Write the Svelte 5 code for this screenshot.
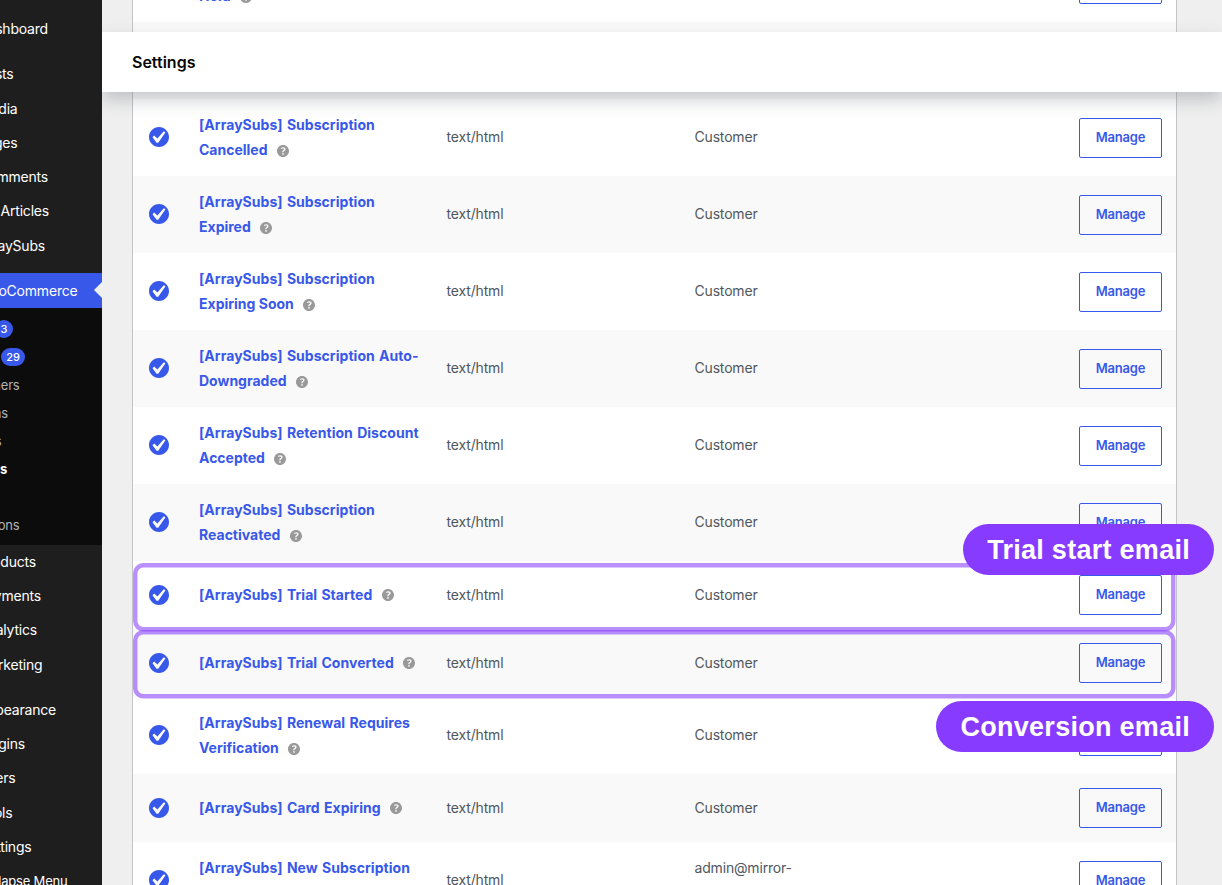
<script>
  const mainMenu = [
    { label: 'Dashboard', end: 48, gap: 11 },
    { label: 'Posts', end: 13.5 },
    { label: 'Media', end: 17.5 },
    { label: 'Pages', end: 17.5 },
    { label: 'Comments', end: 48 },
    { label: 'KB Articles', end: 49 },
    { label: 'ArraySubs', end: 45, gap: 11 },
    { label: 'WooCommerce', end: 77.5, current: true }
  ];

  const subMenu = [
    { label: 'Home', count: 3, end: 13 },
    { label: 'Orders', count: 29, end: 25 },
    { label: 'Customers', end: 19.5 },
    { label: 'Coupons', end: 8 },
    { label: 'Reports', end: 1.5 },
    { label: 'Settings', end: 7, current: true },
    { label: 'Status', end: -6 },
    { label: 'Extensions', end: 19.5 }
  ];

  const lowerMenu = [
    { label: 'Products', end: 36 },
    { label: 'Payments', end: 41 },
    { label: 'Analytics', end: 37 },
    { label: 'Marketing', end: 42.5, gap: 11 },
    { label: 'Appearance', end: 56 },
    { label: 'Plugins', end: 25 },
    { label: 'Users', end: 15.5 },
    { label: 'Tools', end: 12.5 },
    { label: 'Settings', end: 31.5 },
    { label: 'Collapse Menu', end: 67.5, small: true }
  ];

  const emails = [
    { lines: ['[ArraySubs] Subscription On', 'Hold'] },
    { lines: ['[ArraySubs] Subscription', 'Renewed'] },
    { lines: ['[ArraySubs] Subscription', 'Cancelled'] },
    { lines: ['[ArraySubs] Subscription', 'Expired'] },
    { lines: ['[ArraySubs] Subscription', 'Expiring Soon'] },
    { lines: ['[ArraySubs] Subscription Auto-', 'Downgraded'] },
    { lines: ['[ArraySubs] Retention Discount', 'Accepted'] },
    { lines: ['[ArraySubs] Subscription', 'Reactivated'] },
    { lines: ['[ArraySubs] Trial Started'] },
    { lines: ['[ArraySubs] Trial Converted'] },
    { lines: ['[ArraySubs] Renewal Requires', 'Verification'] },
    { lines: ['[ArraySubs] Card Expiring'] },
    { lines: ['[ArraySubs] New Subscription', 'Created'], recipient: ['admin@mirror-', 'site.test'] }
  ];

  // the menu is scrolled 58px to the left
  const offset = 58;
</script>

{#snippet menuItem(item)}
  <li class:current={item.current} class:small={item.small} style:margin-bottom="{item.gap ?? 0}px">
    <a href="#menu" style:width="{item.end + offset}px">{item.label}</a>
  </li>
{/snippet}

<div class="page">
  <nav class="sidebar">
    <ul class="menu">
      {#each mainMenu as item}
        {@render menuItem(item)}
      {/each}
    </ul>
    <ul class="submenu">
      {#each subMenu as item}
        <li class:current={item.current}>
          <a href="#submenu" style:width="{item.end + offset}px">
            {item.label}
            {#if item.count}<span class="count">{item.count}</span>{/if}
          </a>
        </li>
      {/each}
    </ul>
    <ul class="menu lower">
      {#each lowerMenu as item}
        {@render menuItem(item)}
      {/each}
    </ul>
  </nav>

  <main>
    <div class="emails">
      {#each emails as email}
        <div class="row" class:single={email.lines.length === 1}>
          <svg class="status" viewBox="2 2 16 16" aria-hidden="true">
            <path d="M10 2c-4.42 0-8 3.58-8 8s3.58 8 8 8 8-3.58 8-8-3.58-8-8-8zm-.615 12.66h-1.34l-3.24-4.54 1.341-1.25 2.569 2.4 5.141-5.931 1.34.94-5.811 8.381z" />
          </svg>
          <div class="name">
            {#each email.lines as line, i}
              <div class="line">
                <a href="#email">{line}</a>
                {#if i === email.lines.length - 1}
                  <svg class="help" viewBox="3 3 14 14" aria-hidden="true">
                    <path d="M17 10c0-3.87-3.14-7-7-7-3.87 0-7 3.13-7 7s3.13 7 7 7c3.86 0 7-3.13 7-7zm-6.3 1.48H9.14v-.43c0-.38.08-.7.24-.98s.46-.57.88-.89c.41-.29.68-.53.81-.71.14-.18.2-.39.2-.62 0-.25-.09-.44-.28-.58-.19-.13-.45-.19-.79-.19-.58 0-1.25.19-2 .57l-.64-1.28c.87-.49 1.8-.74 2.77-.74.81 0 1.45.2 1.92.58.48.39.71.91.71 1.55 0 .43-.09.8-.29 1.11-.19.32-.57.67-1.11 1.06-.38.28-.61.49-.71.63-.1.15-.15.34-.15.57v.35zm-1.47 2.74c-.18-.17-.27-.42-.27-.73 0-.33.08-.58.26-.75s.43-.25.77-.25c.32 0 .57.09.75.26s.27.42.27.74c0 .3-.09.55-.27.72-.18.18-.43.27-.75.27-.33 0-.58-.09-.76-.26z" />
                  </svg>
                {/if}
              </div>
            {/each}
          </div>
          <div class="cell">text/html</div>
          <div class="cell">
            {#each email.recipient ?? ['Customer'] as part}
              <div>{part}</div>
            {/each}
          </div>
          <button class="manage">Manage</button>
        </div>
      {/each}
    </div>
    <header><h1>Settings</h1></header>
  </main>

  <svg class="marks" viewBox="0 0 1222 885" aria-hidden="true">
    <rect x="135.25" y="565.25" width="1038" height="64" rx="8" />
    <rect x="135.25" y="632.25" width="1038" height="64" rx="8" />
  </svg>
  <div class="tag start">Trial start email</div>
  <div class="tag conversion">Conversion email</div>
</div>

<style>
  :global(body) {
    background: #efefef;
  }

  .page {
    position: relative;
    display: flex;
    width: 1222px;
    height: 885px;
    overflow: hidden;
    background: #efefef;
    font-family: Inter, 'Liberation Sans', sans-serif;
  }

  /* Admin menu */
  .sidebar {
    position: relative;
    z-index: 2;
    flex: none;
    width: 160px;
    margin-left: -58px;
    padding-top: 11px;
    box-sizing: border-box;
    background: #1e1e1e;
  }

  ul {
    margin: 0;
    padding: 0;
    list-style: none;
  }

  .menu li {
    display: flex;
    align-items: center;
    position: relative;
    height: 34.25px;
  }

  .sidebar a {
    display: flex;
    justify-content: flex-end;
    align-items: center;
    color: #fff;
    font-size: 14px;
    letter-spacing: -0.2px;
    white-space: nowrap;
    text-decoration: none;
  }

  .menu li.current {
    height: 35px;
    background: #3858e9;
  }

  .menu li.current::after {
    content: '';
    position: absolute;
    right: 0;
    border: 8px solid transparent;
    border-right-color: #efefef;
  }

  .menu li.small a {
    font-size: 13px;
  }

  .menu a {
    padding-top: 1px;
  }

  .menu.lower a {
    padding: 0 0 1px;
  }

  .submenu {
    height: 237px;
    padding-top: 7px;
    box-sizing: border-box;
    background: #0c0c0c;
  }

  .submenu li {
    display: flex;
    align-items: center;
    height: 28px;
  }

  .submenu a {
    color: #b4b4b4;
    font-size: 13px;
  }

  .submenu .current a {
    color: #fff;
    font-weight: 700;
  }

  .count {
    min-width: 18px;
    height: 18px;
    margin-left: 4px;
    padding: 0 5px;
    box-sizing: border-box;
    border-radius: 9px;
    background: #3858e9;
    color: #fff;
    font-size: 11px;
    font-weight: 500;
    line-height: 18px;
    letter-spacing: 0;
    text-align: center;
  }

  /* Settings page */
  main {
    flex: 1;
    position: relative;
    padding: 0 45px 0 30px;
  }

  header {
    position: absolute;
    top: 32px;
    left: 0;
    right: 0;
    display: flex;
    align-items: center;
    height: 60px;
    background: #fff;
    box-shadow: 0 8px 16px 0 rgba(85, 93, 102, 0.3);
  }

  h1 {
    margin: 0 0 0 30px;
    color: #070707;
    font-size: 16px;
    font-weight: 600;
  }

  .emails {
    margin-top: -55px;
    border: solid #c3c4c7;
    border-width: 0 1px;
  }

  .row {
    display: grid;
    grid-template-columns: 66px 247.6px 247.9px 1fr auto;
    align-items: center;
    height: 77px;
    padding-right: 14px;
    background: #fff;
  }

  .row:nth-child(even) {
    background: #f9f9f9;
  }

  .row.single {
    height: 68px;
  }

  .status {
    width: 20px;
    height: 20px;
    margin: -1px 0 0 16px;
    fill: #3858e9;
  }

  .name {
    margin-top: -2px;
  }

  .line {
    display: flex;
    align-items: center;
    height: 25px;
  }

  .name a {
    color: #3858e9;
    font-size: 14px;
    font-weight: 700;
    white-space: nowrap;
    text-decoration: none;
  }

  .line:first-child a {
    letter-spacing: 0.04px;
    word-spacing: 0.9px;
  }

  .help {
    width: 12px;
    height: 12px;
    margin: 3px 0 0 9.5px;
    fill: #999;
  }

  .single .help {
    margin-top: 2px;
  }

  .cell {
    color: #50575e;
    font-size: 14px;
    line-height: 25px;
    letter-spacing: -0.17px;
    margin-top: -2px;
  }

  .single .cell {
    margin-top: -1px;
  }

  .manage {
    grid-column: 5;
    width: 83px;
    height: 40px;
    margin-top: 1px;
    padding: 0 0 2px;
    border: 1px solid #3858e9;
    border-radius: 2px;
    background: transparent;
    color: #3858e9;
    font: 600 13px Inter, 'Liberation Sans', sans-serif;
    letter-spacing: -0.2px;
  }

  .single .manage {
    margin-top: 0;
  }

  /* Annotations over the table */
  .marks {
    position: absolute;
    inset: 0;
    z-index: 3;
    fill: none;
    stroke: #863bff;
    stroke-opacity: 0.57;
    stroke-width: 4.4;
    pointer-events: none;
  }

  .tag {
    position: absolute;
    right: 8px;
    z-index: 4;
    height: 51px;
    padding: 0 24px;
    border-radius: 26px;
    background: #863bff;
    color: #fff;
    font: bold 27px/53px 'Liberation Sans', Arial, sans-serif;
    letter-spacing: 0.28px;
    white-space: nowrap;
  }

  .start {
    top: 524px;
  }

  .conversion {
    top: 701px;
  }
</style>
